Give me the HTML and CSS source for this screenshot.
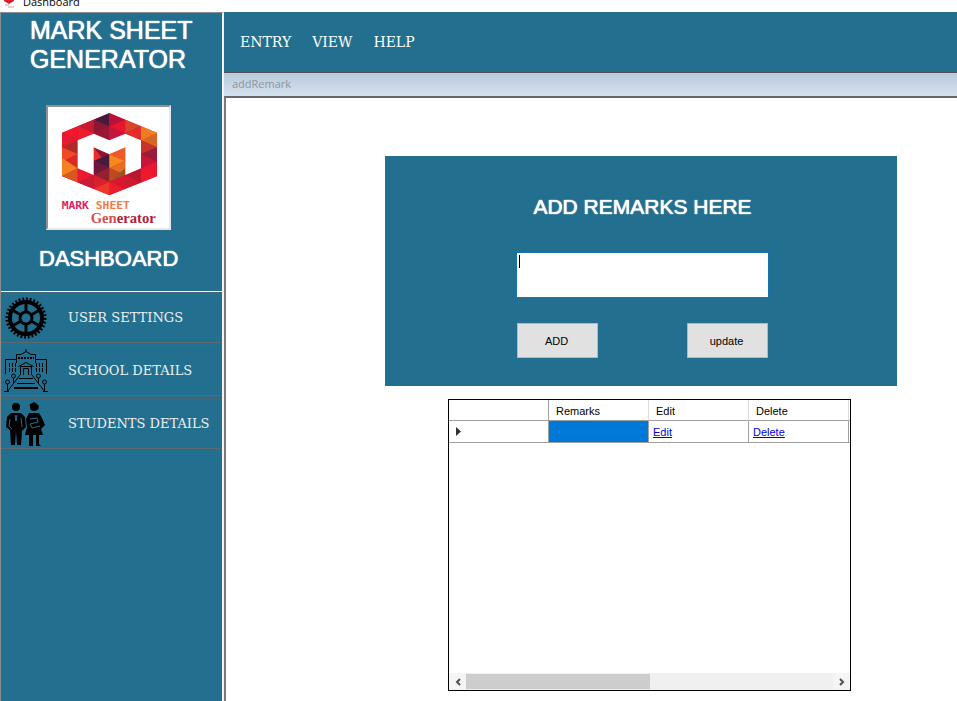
FILE: index.html
```html
<!DOCTYPE html>
<html lang="en">
<head>
<meta charset="utf-8">
<title>Dashboard</title>
<link rel="stylesheet" href="styles.css">
</head>
<body>
<header class="titlebar">
  <svg class="app-icon" viewBox="0 0 12 14" aria-hidden="true"><path d="M6 0l5 2v5L6 10 1 7V2z" fill="#d5202b"/><path d="M2 11h4M5 13h6" stroke="#e59a8e"/></svg>
  <span>Dashboard</span>
</header>
<div class="app">
  <aside class="sidebar">
    <h1 class="brand">MARK SHEET<br>GENERATOR</h1>
    <div class="logo">
      <svg viewBox="-30 -3 363 363" role="img" aria-label="Mark Sheet Generator">
        <defs><clipPath id="hex"><path d="M154 15L297 74V205L154 262L12 205V74Z"/></clipPath></defs>
        <g clip-path="url(#hex)">
          <path fill="#d9162f" d="M12 15H297V262H12z"/>
          <path fill="#451a3d" d="M154 15V56L107 35z"/>
          <path fill="#8c1634" d="M107 35L154 56L107 76z"/>
          <path fill="#b8123a" d="M154 15L202 35L154 56z"/>
          <path fill="#e9152c" d="M202 35V76L154 56z"/>
          <path fill="#971735" d="M107 76L154 56V97z"/>
          <path fill="#c5153c" d="M154 56L202 76L154 97z"/>
          <path fill="#c51a30" d="M59 55L107 35V76z"/>
          <path fill="#ed1d2b" d="M59 55L107 76L59 97z"/>
          <path fill="#ef182d" d="M12 74L59 55V97z"/>
          <path fill="#e41a30" d="M12 74L59 97L12 118z"/>
          <path fill="#b02a28" d="M12 118L59 97V138z"/>
          <path fill="#f04a24" d="M12 118L59 138L12 162z"/>
          <path fill="#d92a27" d="M12 162L59 138V181z"/>
          <path fill="#f4801f" d="M12 150L59 181L12 205z"/>
          <path fill="#d85524" d="M12 205L59 181V224z"/>
          <path fill="#ea192d" d="M59 181L107 201L59 224z"/>
          <path fill="#c91a36" d="M59 224L107 201V243z"/>
          <path fill="#ed2d2a" d="M107 118L154 139L107 159z"/>
          <path fill="#8b1737" d="M107 118L154 139V180z"/>
          <path fill="#451a3d" d="M107 159L154 139V180z"/>
          <path fill="#6c173b" d="M107 159L154 180L107 201z"/>
          <path fill="#92202f" d="M107 201L154 180V221z"/>
          <path fill="#d71f2d" d="M107 201L154 221L107 243z"/>
          <path fill="#ef382a" d="M107 243L154 221V262z"/>
          <path fill="#ee5a23" d="M154 139L202 118V159z"/>
          <path fill="#f6881f" d="M154 139L202 159L154 180z"/>
          <path fill="#e76f21" d="M154 180L202 159V201z"/>
          <path fill="#bc4b23" d="M154 180L202 201L154 221z"/>
          <path fill="#9d5121" d="M154 221L202 180V201z"/>
          <path fill="#d8172d" d="M154 221L202 201V243z"/>
          <path fill="#ea1d2c" d="M154 221L202 243L154 262z"/>
          <path fill="#d4472a" d="M202 35L249 55L202 76z"/>
          <path fill="#e62b2b" d="M202 76L249 55V97z"/>
          <path fill="#f5841f" d="M249 55L297 74V97z"/>
          <path fill="#ee7d20" d="M249 55L297 97H249z"/>
          <path fill="#d96524" d="M249 97L297 74V118z"/>
          <path fill="#c53428" d="M249 97L297 118L249 138z"/>
          <path fill="#971d38" d="M249 138L297 118V162z"/>
          <path fill="#c9153c" d="M249 138L297 162L249 181z"/>
          <path fill="#e8192f" d="M249 181L297 162V205z"/>
          <path fill="#ef182c" d="M249 181L297 205L249 224z"/>
          <path fill="#b9172f" d="M202 201L249 181V224z"/>
          <path fill="#ce1a2d" d="M202 201L249 224L202 243z"/>
        </g>
        <path fill="#fff" d="M59 97L107 77L154 97L202 77L249 97V181L202 201V118L154 139L107 118V201L59 181z"/>
        <text class="logo-mark" x="11" y="302"><tspan fill="#df2264">MARK</tspan> <tspan fill="#f17a45">SHEET</tspan></text>
        <text class="logo-gen" x="98" y="344"><tspan fill="#d7514b">Gen</tspan><tspan fill="#b01d39">erator</tspan></text>
      </svg>
    </div>
    <h2 class="section">DASHBOARD</h2>
    <nav class="side-nav">
      <a href="#user">
        <svg viewBox="0 0 44 44" aria-hidden="true" fill="none" stroke="#000">
          <circle cx="22" cy="22" r="19" stroke-width="3" pathLength="64" stroke-dasharray="1 1"/>
          <circle cx="22" cy="22" r="16" stroke-width="4"/>
          <circle cx="22" cy="22" r="6" stroke-width="3"/>
          <path stroke-width="3" d="M22 5V16M22 28V39M7.300 13.500L17 19M27 25L36.700 30.500M7.300 30.500L17 25M27 19L36.700 13.500"/>
        </svg>
        <span>USER SETTINGS</span>
      </a>
      <a href="#school">
        <svg viewBox="0 0 44 44" aria-hidden="true" fill="none" stroke="#000">
          <path d="M1.500 25V10.500H12.500V5.500H17L22 2.500L27 5.500H31.500V10.500H42.500V25M12.500 10.500V14M31.500 10.500V14M16.500 26V17.500H27.500V26M14.500 17.500L22 13.500L29.500 17.500M19.500 26V19.500H24.500V26M22 0V3"/>
          <path stroke-width="2" stroke-dasharray="2 1" d="M14 9H30"/>
          <path stroke-dasharray="4 1" d="M5.500 14V23M8.500 14V23M11.500 14V23M32.500 14V23M35.500 14V23M38.500 14V23"/>
          <path d="M15 29.500H29M13 34.500H31M16 26L3 43M28 26L41 43M3.500 35V43M40.500 35V43M9.500 29V35M34.500 29V35M0 42.500H5M39 42.500H44"/>
          <path stroke-width="2" d="M10 39H34"/>
          <g fill="#226f90"><circle cx="3.500" cy="33" r="2"/><circle cx="40.500" cy="33" r="2"/><circle cx="9.500" cy="27" r="2"/><circle cx="34.500" cy="27" r="2"/></g>
        </svg>
        <span>SCHOOL DETAILS</span>
      </a>
      <a href="#students">
        <svg viewBox="0 0 44 44" aria-hidden="true">
          <circle cx="12" cy="5" r="4"/><circle cx="30" cy="5" r="4"/><path d="M25 3L30 0L35 4L34 8L31 6z"/>
          <path d="M7 11H17L21 15L22 25L18 29L17 43H13L12 29L11 43H7L6 28L2 25L3 15z"/>
          <path d="M25 11H35L38 16L41 23L37 27L39 33H35V42L37 44H32V33H29V44H25V33H21L23 25L22 17z"/>
          <path fill="none" stroke="#226f90" d="M6 17L5 24L8 27M17 16L18 25M11 13L12 19L13 13M26 17L33 16L34 20L26 22L28 26L36 24"/>
        </svg>
        <span>STUDENTS DETAILS</span>
      </a>
    </nav>
  </aside>
  <div class="workspace">
    <nav class="menu"><a href="#entry">ENTRY</a><a href="#view">VIEW</a><a href="#help">HELP</a></nav>
    <div class="child-title">addRemark</div>
    <main class="content">
      <form class="panel" onsubmit="return false">
        <label class="panel-title" for="remark">ADD REMARKS HERE</label>
        <div class="field"><textarea id="remark"></textarea><span class="caret"></span></div>
        <div class="actions"><button>ADD</button><button>update</button></div>
      </form>
      <section class="grid-view">
        <table>
          <thead><tr><th></th><th>Remarks</th><th>Edit</th><th>Delete</th><th></th></tr></thead>
          <tbody><tr>
            <td><svg class="marker" viewBox="0 0 5 9" aria-hidden="true"><path d="M0 0L5 4.500L0 9z"/></svg></td>
            <td class="selected"></td>
            <td><a href="#edit">Edit</a></td>
            <td><a href="#delete">Delete</a></td>
            <td></td>
          </tr></tbody>
        </table>
        <div class="scrollbar">
          <button aria-label="Scroll left"><svg viewBox="0 0 6 8"><path d="M5 1L2 4L5 7"/></svg></button>
          <div class="track"><div class="thumb"></div></div>
          <button aria-label="Scroll right"><svg viewBox="0 0 6 8"><path d="M1 1L4 4L1 7"/></svg></button>
        </div>
      </section>
    </main>
  </div>
</div>
</body>
</html>
```
FILE: styles.css
```css
* { box-sizing: border-box; }
body {
  margin: 0;
  height: 100vh;
  overflow: hidden;
  display: flex;
  flex-direction: column;
  background: #fff;
  font-family: "Liberation Sans", sans-serif;
}
a { color: inherit; text-decoration: none; }

.titlebar {
  flex: none;
  height: 12px;
  overflow: hidden;
  display: flex;
  align-items: flex-end;
  gap: 8px;
  padding-left: 3px;
  font: 11px/20px "Open Sans", sans-serif;
  color: #000;
}
.app-icon { width: 12px; height: 14px; margin-bottom: 4px; }

.app { flex: 1; display: flex; min-height: 0; }
.sidebar {
  flex: none;
  width: 224px;
  background: #226f90;
  border: solid #8b8d8e;
  border-width: 1px 0 0 1px;
  border-right: 2px solid #f4f4f4;
  color: #fff;
}
.brand, .section, .panel-title {
  color: #fff;
  font-weight: 400;
  text-shadow: 0 0 1px #fff, 0 0 1px #fff;
}
.brand {
  margin: 3px 0 0 29px;
  font-size: 25px;
  line-height: 29px;
}
.logo {
  width: 125px;
  height: 125px;
  margin: 31px 0 0 45px;
  background: #fff;
  border: 2px solid;
  border-color: #8f9292 #e8e8e8 #e8e8e8 #8f9292;
}
.logo svg { display: block; width: 100%; height: 100%; }
.logo-mark { font: 700 34px "DejaVu Sans Mono", monospace; }
.logo-gen { font: 700 44px "Liberation Serif", serif; }
.section {
  margin: 15px 0 0 38px;
  font-size: 22px;
  line-height: 28px;
}
.side-nav {
  display: flex;
  flex-direction: column;
  gap: 2px;
  margin-top: 18px;
  border-top: 1px solid #fff;
}
.side-nav a {
  display: flex;
  align-items: center;
  gap: 20px;
  height: 51px;
  padding-left: 3px;
  border-top: 1px solid #4a6672;
  border-bottom: 1px solid #5c6a70;
  color: #eef0f0;
  font: 13px/20px "DejaVu Serif", serif;
  white-space: nowrap;
}
.side-nav svg { flex: none; width: 44px; height: 44px; }

.workspace { flex: 1; min-width: 0; display: flex; flex-direction: column; }
.menu {
  height: 61px;
  display: flex;
  align-items: center;
  gap: 21px;
  padding-left: 16px;
  background: #226f90;
  border-bottom: 1px solid #4d5055;
  color: #fff;
  font: 14px/20px "DejaVu Serif", serif;
}
.child-title {
  height: 23px;
  padding-left: 8px;
  background: linear-gradient(#b9c9da, #d5e2f0);
  color: #8e959c;
  font: 11px/22px "Open Sans", sans-serif;
}
.content {
  flex: 1;
  padding: 58px 0 0 159px;
  border-top: 2px solid #66686b;
  border-left: 2px solid #77797b;
  background: #fff;
}
.panel {
  width: 512px;
  height: 230px;
  display: flex;
  flex-direction: column;
  align-items: center;
  padding: 38px 0 0 3px;
  background: #226f90;
}
.panel-title { font-size: 21px; line-height: 26px; }
.field { position: relative; width: 251px; height: 44px; margin-top: 33px; }
.field textarea {
  display: block;
  width: 100%;
  height: 100%;
  border: 0;
  padding: 2px;
  resize: none;
  outline: 1px solid #1773ae;
  background: #fff;
}
.caret { position: absolute; left: 2px; top: 2px; width: 1px; height: 13px; background: #000; }
.actions { width: 251px; margin-top: 26px; display: flex; justify-content: space-between; }
.actions button {
  width: 81px;
  height: 35px;
  padding: 0 2px 0 0;
  border: 1px solid #b5b8ba;
  background: #e1e1e1;
  color: #000;
  font: 11px "Liberation Sans", sans-serif;
}

.grid-view {
  width: 403px;
  height: 292px;
  margin: 13px 0 0 63px;
  display: flex;
  flex-direction: column;
  justify-content: space-between;
  border: 1px solid #000;
  background: #fff;
}
table { width: 100%; table-layout: fixed; border-collapse: separate; border-spacing: 0; font-size: 11px; }
th, td {
  width: 100px;
  padding: 0 4px;
  text-align: left;
  font-weight: 400;
  border-right: 1px solid #a0a0a0;
  border-bottom: 1px solid #a0a0a0;
}
th { height: 21px; padding: 2px 4px 0 7px; border-right-color: #dcdcdc; }
td { height: 22px; }
th:first-child, td:first-child { border-right-color: #a0a0a0; }
td:first-child { padding-left: 7px; }
th:last-child, td:last-child { width: 1px; padding: 0; border-right: 0; }
td a { color: #0000d8; text-decoration: underline; }
.selected { background: #0078d7; }
.marker { display: block; width: 5px; height: 9px; fill: #333; }

.scrollbar { display: flex; height: 17px; background: #f0f0f0; }
.scrollbar button { width: 17px; padding: 0; border: 0; background: #f5f5f5; }
.scrollbar svg { display: block; width: 6px; height: 8px; margin: 0 auto; fill: none; stroke: #505050; stroke-width: 2; }
.track { flex: 1; padding: 1px 0; }
.thumb { width: 50%; height: 100%; background: #cdcdcd; }
```
